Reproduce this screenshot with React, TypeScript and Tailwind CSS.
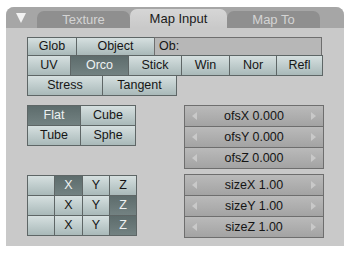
import React from "react";

const font = "font-['Liberation_Sans',Arial,sans-serif]";

type BtnProps = { label?: string; className: string; on?: boolean };

const Btn = ({ label, className, on }: BtnProps) => (
  <div
    className={`flex items-center justify-center border border-[#5e6666] -ml-px first:ml-0 text-[12.5px] leading-none ${
      on
        ? "bg-linear-to-b from-[#5d6c6c] to-[#738282] text-[#eef2f2]"
        : "bg-linear-to-b from-[#d6e0e0] to-[#a9b9b9] text-[#161616]"
    } ${className}`}
  >
    {label}
  </div>
);

const NumField = ({ label }: { label: string }) => (
  <div className="flex items-center h-[22px] -mt-px first:mt-0 border border-[#6e6e6e] bg-linear-to-b from-[#bababa] to-[#a3a3a3] px-[7px] text-[12.5px] text-[#151515]">
    <svg width="5" height="8" viewBox="0 0 5 8">
      <path d="M5 0 L0 4 L5 8 Z" fill="#c9c9c9" />
    </svg>
    <span className="flex-1 text-center">{label}</span>
    <svg width="5" height="8" viewBox="0 0 5 8">
      <path d="M0 0 L5 4 L0 8 Z" fill="#c9c9c9" />
    </svg>
  </div>
);

const Tab = ({ label, active, className }: { label: string; active?: boolean; className: string }) => (
  <div
    className={`flex items-center justify-center rounded-t-[7px] text-[13px] ${
      active
        ? "h-[19px] bg-linear-to-b from-[#d6d6d6] to-[#c9c9c9] text-[#1a1a1a]"
        : "h-[17px] bg-[#8f8f8f] text-[#d4d4d4]"
    } ${className}`}
  >
    {label}
  </div>
);

const axisRows = [
  { x: true, z: false },
  { x: false, z: true },
  { x: false, z: true },
];

export default function App() {
  return (
    <div className={`w-[350px] h-[254px] bg-white pt-[7px] pl-[6px] ${font}`}>
      <div className="w-[338px] h-[239px] bg-[#c9c9c9] rounded-t-[8px] flex flex-col">
        {/* header with tabs */}
        <div className="h-[21px] bg-[#a6a6a6] rounded-t-[8px] flex items-end">
          <div className="w-[31px] h-full flex items-start pt-[6px] pl-[10px]">
            <svg width="10" height="10" viewBox="0 0 10 10">
              <path d="M0 0 L10 0 L5 10 Z" fill="#f2f2f2" />
            </svg>
          </div>
          <Tab label="Texture" className="w-[93px]" />
          <Tab label="Map Input" active className="w-[97px]" />
          <Tab label="Map To" className="w-[93px]" />
        </div>

        <div className="pl-[21px] pt-[9px] flex flex-col">
          <div className="flex h-[19px]">
            <Btn label="Glob" className="w-[50px]" />
            <Btn label="Object" className="w-[79px]" />
            <div className="-ml-px w-[168px] border border-[#6e6e6e] bg-[#b7b7b7] text-[12.5px] text-[#151515] flex items-center pl-[4px]">
              Ob:
            </div>
          </div>
          <div className="flex h-[21px] -mt-px">
            <Btn label="UV" className="w-[44px]" />
            <Btn label="Orco" on className="w-[59px]" />
            <Btn label="Stick" className="w-[54px]" />
            <Btn label="Win" className="w-[49px]" />
            <Btn label="Nor" className="w-[48px]" />
            <Btn label="Refl" className="w-[47px]" />
          </div>
          <div className="flex h-[21px] -mt-px">
            <Btn label="Stress" className="w-[76px]" />
            <Btn label="Tangent" className="w-[75px]" />
          </div>

          <div className="flex mt-[9px]">
            <div className="w-[157px] flex flex-col">
              <div className="flex h-[21px]">
                <Btn label="Flat" on className="w-[54px]" />
                <Btn label="Cube" className="w-[56px]" />
              </div>
              <div className="flex h-[21px] -mt-px">
                <Btn label="Tube" className="w-[54px]" />
                <Btn label="Sphe" className="w-[56px]" />
              </div>

              <div className="flex flex-col mt-[29px]">
                {axisRows.map((r, i) => (
                  <div key={i} className="flex h-[21px] -mt-px first:mt-0">
                    <Btn className="w-[28px]" />
                    <Btn label="X" on={r.x} className="w-[29px]" />
                    <Btn label="Y" className="w-[28px]" />
                    <Btn label="Z" on={r.z} className="w-[28px]" />
                  </div>
                ))}
              </div>
            </div>

            <div className="w-[140px] flex flex-col">
              <div className="flex flex-col">
                <NumField label="ofsX 0.000" />
                <NumField label="ofsY 0.000" />
                <NumField label="ofsZ 0.000" />
              </div>
              <div className="flex flex-col mt-[5px]">
                <NumField label="sizeX 1.00" />
                <NumField label="sizeY 1.00" />
                <NumField label="sizeZ 1.00" />
              </div>
            </div>
          </div>
        </div>
      </div>
    </div>
  );
}
